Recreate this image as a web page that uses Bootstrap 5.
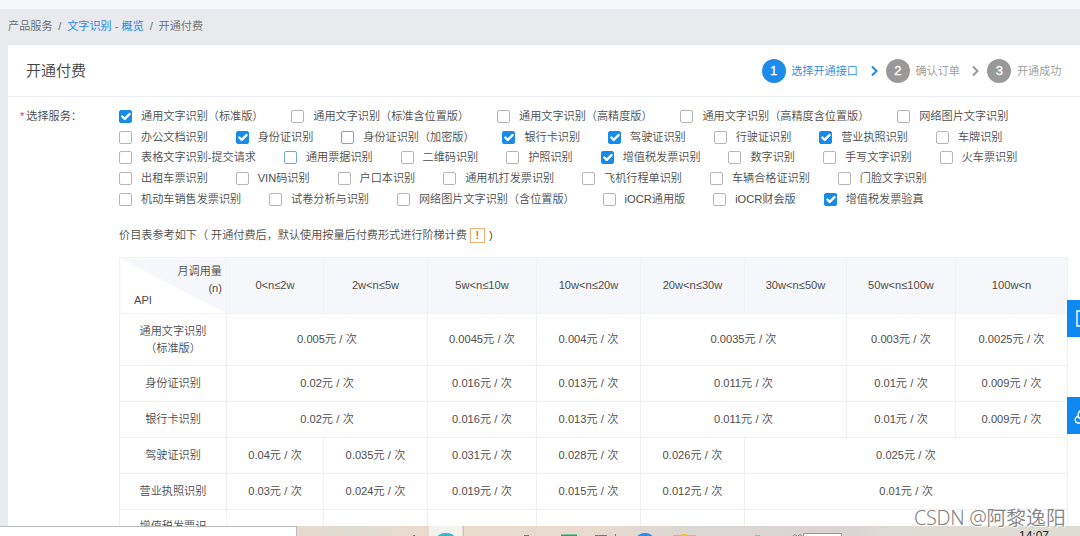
<!DOCTYPE html>
<html lang="zh-CN">
<head>
<meta charset="utf-8">
<title>开通付费</title>
<link href="https://cdn.jsdelivr.net/npm/bootstrap@5.3.0/dist/css/bootstrap.min.css" rel="stylesheet">
<style>
body{font:350 11.13px/17px "Liberation Sans","Noto Sans CJK SC",sans-serif;color:#4c4c4c;background:#e9eaed;height:536px}
.topstrip{height:9px;background:#f5f6f7}
.crumbs{height:35px;padding:0 8px;gap:5.8px;color:#6a6a6a}
.crumbs a{color:#2c86e8;font-weight:400}
.panel{margin:1px 0 0 8px;height:481px}
.panel-head{height:52px;padding:0 18.5px 0 18px;border-bottom:1px solid #eff0f3}
.panel-head h1{font-size:15px;font-weight:350;color:#444}
.num{width:24px;height:24px;border-radius:50%;background:#999;color:#fff;font-size:13px;font-weight:400;-webkit-text-stroke:.3px #fff}
.step{gap:5.5px;color:#999}
.step>b{font-weight:350;position:relative;top:1px}
.step.on{color:#2b8ae6}.step.on .num{background:#1e8aea}
.arrow{width:7px;height:12px;fill:none;stroke:#999;stroke-width:2}
.choose{padding:9.5px 0 0 12px}
.lbl{width:99px;padding-top:1px}
.lbl i{color:#f04134;font-style:normal;margin-right:2px}
.svc{height:20.6px;gap:27.95px;white-space:nowrap}
.svc label{display:flex;align-items:center;gap:9px}
.form-check-input.bx{width:13px;height:13px;margin:0;border:1px solid #b5b5b8;border-radius:2px;float:none;flex:none}
.form-check-input.bx.hl{border-color:#70a7da}
.form-check-input.bx:checked{background-color:#178bea;border-color:#178bea;background-size:16px}
.note{margin:16.5px 0 0 111px;height:20px}
.warn{width:15px;height:15px;border:1px solid #efad78;color:#f0692c;font-weight:700;margin:0 4px 0 3px}
.price{width:948px;margin:11.5px 0 0 111px;table-layout:fixed;border-collapse:collapse;text-align:center;color:#4c4c4c}
.price th,.price td{border:1px solid #eff0f5;font-weight:350;padding:0;vertical-align:middle}
.price td{word-spacing:.2px}
.price tr{height:36px}
.price thead tr{height:56px}
.price thead th{background:#f6f7fa;border-color:#f1f2f6}
.price .tall{height:52px}
.price thead .corner{background:linear-gradient(to top right,#fff 49.7%,#f6f7fa 50.3%)}
.corner .v{text-align:right;padding:1px 4px 0 0}
.corner .h{text-align:left;padding-left:14px;margin-top:-5px}
.taskbar{left:0;top:526px;width:1080px;height:10px;background:linear-gradient(90deg,#e8d9cc 296px,#dddcd0 350px,#e8dacc 410px,#e8dace 590px,#dbd7d4 690px,#dcd3d3 850px,#deddd4 900px,#dedcd1)}
.taskbar svg{display:block}
.search{width:297px;background:#fff;border:solid #bbb;border-width:1px 1px 0 0}
.side{right:0;width:13px;height:37px;background:#0d89f0}
.s1{top:300px}.s2{top:397px}
.wm{left:914px;top:506px;font:350 19.8px/24px "Noto Sans","Noto Sans CJK SC",sans-serif;color:#858585;white-space:nowrap;text-shadow:1px 1px 0 #fff}
.wm span{letter-spacing:-.3px;font-weight:300}
.clock{left:1019px;top:530px;height:6px;overflow:hidden;font:400 12px/12px "Liberation Sans",sans-serif;color:#222}
</style>
<script src="https://cdn.jsdelivr.net/npm/bootstrap@5.3.0/dist/js/bootstrap.bundle.min.js"></script>
</head>
<body class="position-relative overflow-hidden">
<div class="topstrip"></div>
<nav class="crumbs d-flex align-items-center"><span>产品服务</span><span>/</span><a class="text-decoration-none" href="#">文字识别 - 概览</a><span>/</span><span>开通付费</span></nav>
<main class="panel bg-white overflow-hidden">
<header class="panel-head d-flex align-items-center justify-content-between">
<h1 class="m-0">开通付费</h1>
<div class="d-flex align-items-center">
<div class="step on d-flex align-items-center"><span class="num d-flex align-items-center justify-content-center">1</span><b>选择开通接口</b></div>
<svg class="arrow" style="margin:0 8px 0 13px;stroke:#1e8aea" viewBox="0 0 7 12"><path d="M1 1.5 5.5 6 1 10.5"/></svg>
<div class="step d-flex align-items-center"><span class="num d-flex align-items-center justify-content-center">2</span><b>确认订单</b></div>
<svg class="arrow" style="margin:0 8px 0 12.5px" viewBox="0 0 7 12"><path d="M1 1.5 5.5 6 1 10.5"/></svg>
<div class="step d-flex align-items-center"><span class="num d-flex align-items-center justify-content-center">3</span><b>开通成功</b></div>
</div>
</header>
<section class="choose d-flex">
<div class="lbl"><i>*</i>选择服务：</div>
<div id="services"></div>
</section>
<div class="note d-flex align-items-center"><span>价目表参考如下（ 开通付费后，默认使用按量后付费形式进行阶梯计费</span><span class="warn d-flex align-items-center justify-content-center">!</span>)</div>
<table class="price">
<colgroup><col style="width:107px"><col style="width:97px"><col style="width:104px"><col style="width:109px"><col style="width:104px"><col style="width:104px"><col style="width:102px"><col style="width:109px"><col style="width:112px"></colgroup>
<thead><tr><th class="corner"><div class="v">月调用量<br>(n)</div><div class="h">API</div></th><th>0&lt;n≤2w</th><th>2w&lt;n≤5w</th><th>5w&lt;n≤10w</th><th>10w&lt;n≤20w</th><th>20w&lt;n≤30w</th><th>30w&lt;n≤50w</th><th>50w&lt;n≤100w</th><th>100w&lt;n</th></tr></thead>
<tbody>
<tr class="tall"><td>通用文字识别<br>（标准版）</td><td colspan="2">0.005元 / 次</td><td>0.0045元 / 次</td><td>0.004元 / 次</td><td colspan="2">0.0035元 / 次</td><td>0.003元 / 次</td><td>0.0025元 / 次</td></tr>
<tr><td>身份证识别</td><td colspan="2">0.02元 / 次</td><td>0.016元 / 次</td><td>0.013元 / 次</td><td colspan="2">0.011元 / 次</td><td>0.01元 / 次</td><td>0.009元 / 次</td></tr>
<tr><td>银行卡识别</td><td colspan="2">0.02元 / 次</td><td>0.016元 / 次</td><td>0.013元 / 次</td><td colspan="2">0.011元 / 次</td><td>0.01元 / 次</td><td>0.009元 / 次</td></tr>
<tr><td>驾驶证识别</td><td>0.04元 / 次</td><td>0.035元 / 次</td><td>0.031元 / 次</td><td>0.028元 / 次</td><td>0.026元 / 次</td><td colspan="3">0.025元 / 次</td></tr>
<tr><td>营业执照识别</td><td>0.03元 / 次</td><td>0.024元 / 次</td><td>0.019元 / 次</td><td>0.015元 / 次</td><td>0.012元 / 次</td><td colspan="3">0.01元 / 次</td></tr>
<tr class="tall"><td class="align-top pt-2">增值税发票识</td><td></td><td></td><td></td><td></td><td></td><td colspan="3"></td></tr>
</tbody></table>
</main>
<div class="side s1 position-absolute"><svg width="13" height="37" fill="none" stroke="#fff" stroke-width="1.4"><path d="M14 11H10V26H14"/></svg></div>
<div class="side s2 position-absolute"><svg width="13" height="37" fill="none" stroke="#fff" stroke-width="1.4"><path d="M14 26H12A3 3 0 0 1 11 19.5M14 13Q11 15 11 18Q11 21 14 22"/></svg></div>
<footer class="taskbar position-absolute d-flex"><div class="search"></div>
<svg width="783" height="10" viewBox="297 0 783 10"><path fill="#f4f2ee" d="M429 0h33v10h-33z"/><path stroke="#c9c2bb" d="M463.5 0v10"/><ellipse cx="446" cy="12" rx="9" ry="5" fill="#28bccd"/><path fill="#777" d="M413 9h2v1h-2zM524 9h5v1h-5zM595 9h12v1h-12zM615 8h1v2h-1z"/><path fill="#25a76c" d="M561 8.5h16V10h-16z"/><ellipse cx="645" cy="12" rx="8" ry="5" fill="#2e8df0"/><path fill="#e7a2a0" d="M673 9h23v1h-23z"/><path fill="#f0c33c" d="M681 8h6v2h-6z"/><path fill="#8bc7a5" d="M755 9h5v1h-5z"/><path d="M793 10q2-3 4 0M798 10q2-3 4 0" fill="none" stroke="#888"/><path fill="#fff" stroke="#999" d="M803.5 7.5h38V11h-38z"/></svg></footer>
<div class="clock position-absolute">14:07</div>
<div class="wm position-absolute"><span>CSDN @</span>阿黎逸阳</div>
<script>
// "+" marks a selected service, "~" one with a blue outline
const rows=[
"+通用文字识别（标准版）|通用文字识别（标准含位置版）|通用文字识别（高精度版）|通用文字识别（高精度含位置版）|网络图片文字识别",
"办公文档识别|+身份证识别|~身份证识别（加密版）|+银行卡识别|+驾驶证识别|行驶证识别|+营业执照识别|车牌识别",
"表格文字识别-提交请求|~通用票据识别|二维码识别|护照识别|+增值税发票识别|数字识别|手写文字识别|火车票识别",
"出租车票识别|VIN码识别|户口本识别|通用机打发票识别|飞机行程单识别|车辆合格证识别|门脸文字识别",
"机动车销售发票识别|试卷分析与识别|网络图片文字识别（含位置版）|iOCR通用版|iOCR财会版|+增值税发票验真"];
document.getElementById("services").innerHTML=rows.map(r=>'<div class="svc d-flex align-items-center">'+r.split("|").map(s=>`<label><input type="checkbox" class="form-check-input bx${s[0]=="~"?" hl":""}"${s[0]=="+"?" checked":""}>${s.replace(/^[+~]/,"")}</label>`).join("")+"</div>").join("");
</script>
</body>
</html>
